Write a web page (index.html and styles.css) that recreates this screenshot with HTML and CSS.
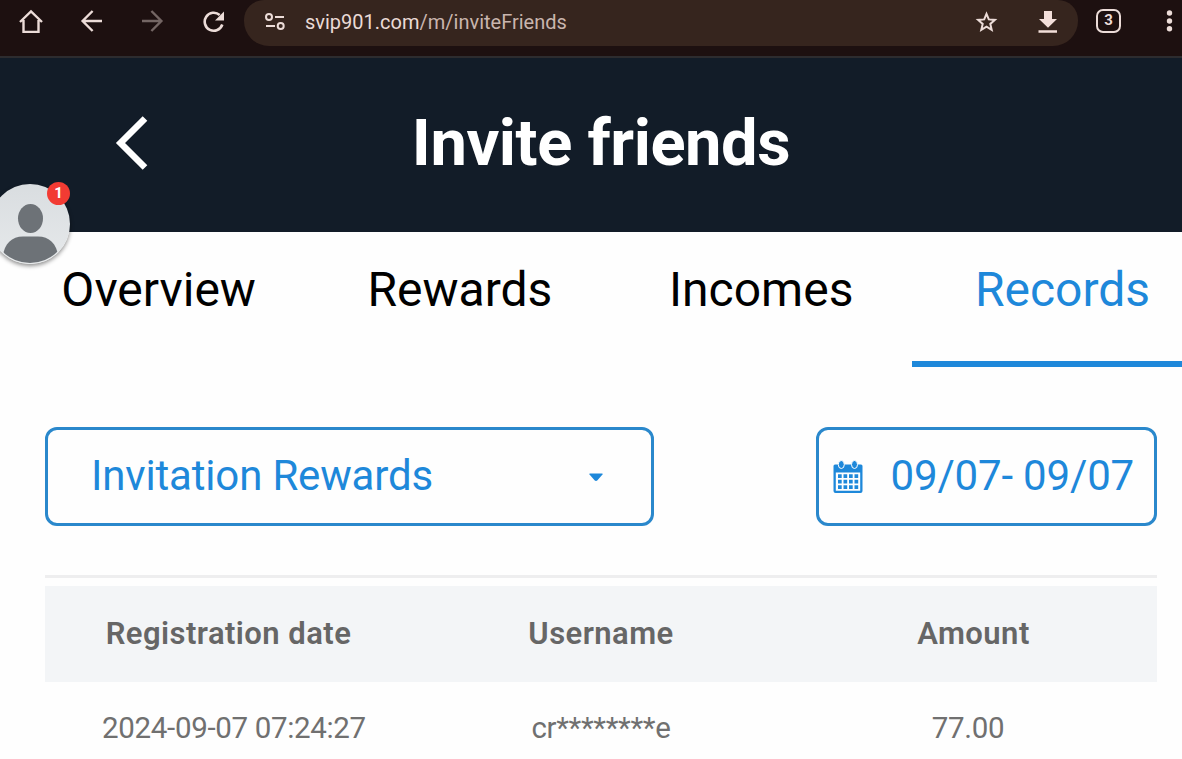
FILE: index.html
```html
<!DOCTYPE html>
<html lang="en">
<head>
    <meta charset="UTF-8">
    <meta name="viewport" content="width=device-width, initial-scale=1.0">
    <title>Invite friends</title>
    <link rel="stylesheet" href="styles.css">
</head>
<body>
    <div class="browser-bar">
        <div class="nav-icons">
            <svg width="24" height="24" viewBox="0 0 24 24" fill="none" stroke="#ecdcd8" stroke-width="2.4"><path d="M1 13 12 2.500l11 10.500M4.500 11v12h15V11"/></svg>
            <svg width="24" height="24" viewBox="0 0 24 24" fill="none" stroke="#ecdcd8" stroke-width="2.4"><path d="M22 12H3M12.600 2 2.600 12l10 10"/></svg>
            <svg class="disabled" width="24" height="24" viewBox="0 0 24 24" fill="none" stroke="#ecdcd8" stroke-width="2.4"><path d="M1 12h19M10.400 2l10 10-10 10"/></svg>
            <svg width="24" height="24" viewBox="0 0 24 24"><path d="M20.300 15.500A9 9 0 1 1 17.700 6" fill="none" stroke="#ecdcd8" stroke-width="2.600"/><path d="M22 2.500v9h-9z" fill="#ecdcd8"/></svg>
        </div>
        <div class="address">
            <svg width="22" height="20" viewBox="0 0 22 20" fill="none" stroke="#ecdcd8" stroke-width="2"><circle cx="5" cy="5" r="3"/><path d="M11 5h9M2 14h9"/><circle cx="16.700" cy="14" r="3"/></svg>
            <span class="url">svip901.com<span class="path">/m/inviteFriends</span></span>
            <svg class="star" width="24" height="24" viewBox="0 0 24 24" fill="none" stroke="#ecdcd8" stroke-width="2"><path d="M12.500 3.800l2.300 5.600 6.100.5-4.600 4 1.400 5.900-5.200-3.200-5.200 3.200 1.400-5.900-4.600-4 6.100-.5z"/></svg>
            <svg width="24" height="24" viewBox="0 0 24 24" fill="#f3dfda"><path d="M8 1h8v8h5L12 17.800 3 9h5zM2.500 20.200h18.500v2.600h-18.500z"/></svg>
        </div>
        <div class="tab-count">3</div>
        <svg class="menu-dots" width="8" height="24" viewBox="0 0 8 24" fill="#ecdcd8"><circle cx="4.500" cy="4" r="2.700"/><circle cx="4.500" cy="12" r="2.700"/><circle cx="4.500" cy="19.800" r="2.700"/></svg>
    </div>

    <div class="header">
        <svg class="back" width="36" height="56" viewBox="0 0 36 56" fill="none" stroke="#fff" stroke-width="6.500"><path d="M31 3.500 6.500 28 31 52.500"/></svg>
        <h1>Invite friends</h1>
        <div class="avatar">
            <svg width="80" height="80" viewBox="0 0 80 80" fill="#6d7277"><defs><clipPath id="face"><circle cx="40" cy="40" r="39"/></clipPath></defs><g clip-path="url(#face)"><ellipse cx="40.500" cy="34.500" rx="12.500" ry="14.500"/><path d="M13 80V72C14 60 22 52.500 33 52.500H48C59 52.500 67 60 68 72V80z"/></g></svg>
            <span class="badge">1</span>
        </div>
    </div>

    <div class="tabs">
        <div class="tab">Overview</div>
        <div class="tab">Rewards</div>
        <div class="tab">Incomes</div>
        <div class="tab active">Records</div>
    </div>

    <div class="content">
        <div class="filters">
            <div class="select">
                <span>Invitation Rewards</span>
                <svg width="14" height="9" viewBox="0 0 14 9" fill="#1e88da"><path d="M0.500 0.500h13v1L8.500 7.300q-1.500 1.500-3 0L0.500 1.500z"/></svg>
            </div>
            <div class="date-range">
                <svg width="30" height="34" viewBox="0 0 30 34" fill="#1e88da">
                    <path fill-rule="evenodd" d="M2 4.500h26a1.500 1.500 0 0 1 1.500 1.500v25a2 2 0 0 1-2 2h-25a2 2 0 0 1-2-2V6A1.500 1.500 0 0 1 2 4.500zM2.800 12.500v18.300h24.400V12.500z"/>
                    <ellipse cx="8.300" cy="4.500" rx="3" ry="4" stroke="#fff" stroke-width="1"/>
                    <ellipse cx="21.500" cy="4.500" rx="3" ry="4" stroke="#fff" stroke-width="1"/>
                    <path d="M5 14.200h3.700v3.700H5zM10.500 14.200h3.700v3.700h-3.700zM16 14.200h3.700v3.700H16zM21.500 14.200h3.700v3.700h-3.700zM5 19.700h3.700v3.700H5zM10.500 19.700h3.700v3.700h-3.700zM16 19.700h3.700v3.700H16zM21.500 19.700h3.700v3.700h-3.700zM5 25.200h3.700v3.700H5zM10.500 25.200h3.700v3.700h-3.700zM16 25.200h3.700v3.700H16zM21.500 25.200h3.700v3.700h-3.700z"/>
                </svg>
                <span>09/07- 09/07</span>
            </div>
        </div>

        <div class="records">
            <div class="row head">
                <span>Registration date</span>
                <span>Username</span>
                <span>Amount</span>
            </div>
            <div class="row">
                <span>2024-09-07 07:24:27</span>
                <span>cr********e</span>
                <span>77.00</span>
            </div>
        </div>
    </div>
</body>
</html>
```
FILE: styles.css
```css
* {
    box-sizing: border-box;
}
body {
    margin: 0;
    height: 759px;
    overflow: hidden;
    background: #fefefe;
    font-family: Roboto, sans-serif;
}
svg {
    display: block;
    flex: none;
}
.browser-bar {
    display: flex;
    align-items: flex-start;
    height: 58px;
    background: #1d1010;
    border-bottom: 2px solid #2d2c2f;
}
.nav-icons {
    display: flex;
    gap: 37px;
    width: 244px;
    padding: 9px 0 0 19px;
}
.disabled {
    opacity: 0.42;
}
.address {
    display: flex;
    align-items: center;
    width: 834px;
    height: 46px;
    padding: 0 18px 3px 20px;
    background: #36251e;
    border-radius: 20px 20px 25px 25px;
}
.url {
    margin-left: 19px;
    font-size: 20px;
    color: #eadbd6;
}
.path {
    color: #c9b5ae;
}
.star {
    margin-left: auto;
    margin-right: 38px;
}
.tab-count {
    width: 25px;
    height: 24px;
    margin: 9px 0 0 18px;
    border: 2.5px solid #ecdcd8;
    border-radius: 7px;
    font-size: 15px;
    font-weight: 700;
    line-height: 19px;
    text-align: center;
    color: #ecdcd8;
}
.menu-dots {
    margin: 9px 0 0 44px;
}
.header {
    position: relative;
    display: flex;
    align-items: center;
    height: 174px;
    background: #121c28;
    color: #fff;
}
.back {
    margin: 0 0 4px 114px;
}
.header h1 {
    flex: 1;
    margin: 0 110px 5px -20px;
    font-size: 65px;
    font-weight: 700;
    line-height: 80px;
    letter-spacing: -0.45px;
    text-align: center;
}
.avatar {
    position: absolute;
    left: -10px;
    top: 126px;
    width: 80px;
    height: 80px;
    border-radius: 50%;
    background: linear-gradient(#d9dde0, #e6e9eb);
    box-shadow: 0 2px 4px rgba(0, 0, 0, 0.45);
}
.badge {
    position: absolute;
    right: 0;
    top: -2px;
    width: 23px;
    height: 23px;
    border-radius: 50%;
    background: #f23b33;
    font-size: 15px;
    font-weight: 700;
    line-height: 23px;
    text-align: center;
}
.tabs {
    display: flex;
    height: 135px;
    padding-left: 8px;
}
.tab {
    flex: none;
    width: 301.300px;
    border-bottom: 6px solid transparent;
    font-size: 48px;
    line-height: 116px;
    text-align: center;
    color: #000;
}
.tab.active {
    color: #1e88da;
    border-color: #1e88da;
}
.content {
    padding: 60px 25px 0 45px;
}
.filters {
    display: flex;
    justify-content: space-between;
    font-size: 42px;
    letter-spacing: -0.170px;
    color: #1e88da;
}
.select,
.date-range {
    display: flex;
    align-items: center;
    height: 99px;
    border: 3px solid #2a88cc;
    border-radius: 12px;
    white-space: nowrap;
}
.select {
    justify-content: space-between;
    width: 609px;
    padding: 0 48px 2px 43px;
}
.select svg {
    margin-top: 4px;
}
.date-range {
    justify-content: space-between;
    width: 341px;
    padding: 0 20px 2px 14px;
}
.date-range svg {
    margin-top: 2px;
}
.records {
    margin-top: 49px;
    border-top: 3px solid #eeeeef;
    padding-top: 8px;
}
.row {
    display: grid;
    grid-template-columns: repeat(3, 367px);
    justify-content: center;
    height: 93px;
    font-size: 29.500px;
    line-height: 93px;
    letter-spacing: -0.330px;
    text-align: center;
    color: #707070;
}
.row.head {
    grid-template-columns: repeat(3, 372.500px);
    height: 96px;
    background: #f3f5f7;
    font-size: 31px;
    font-weight: 600;
    line-height: 96px;
    letter-spacing: 0.450px;
    color: #666;
}
```
